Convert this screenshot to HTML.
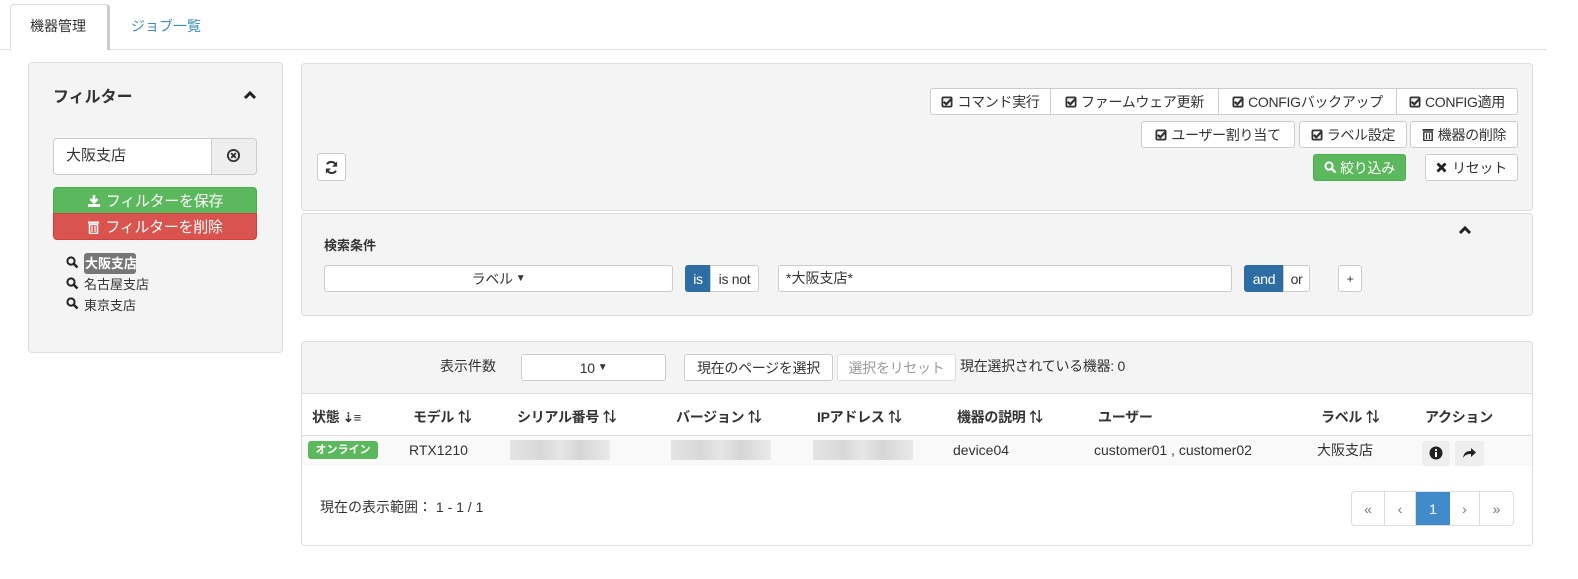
<!DOCTYPE html>
<html><head><meta charset="utf-8"><style>
*{box-sizing:border-box;margin:0;padding:0}
body{width:1578px;height:579px;background:#fff;font-family:"Liberation Sans","Noto Sans CJK JP",sans-serif;font-size:14px;color:#333;position:relative;overflow:hidden}
.a{position:absolute}
.b{position:absolute;border:1px solid #ccc;background:#fff;border-radius:3px;display:flex;align-items:center;justify-content:center;white-space:nowrap;font-size:14px;color:#333;letter-spacing:-0.3px}
.p{position:absolute;background:#f4f4f4;border:1px solid #ddd;border-radius:4px}
.t{position:absolute;white-space:nowrap;line-height:1}
.chk{display:inline-block;width:12px;height:12px;margin-right:4px}
.th{position:absolute;top:407px;font-weight:bold;font-size:14px;white-space:nowrap;letter-spacing:-0.3px}
.blur{position:absolute;top:440px;height:20px;background:linear-gradient(90deg,#e4e4e4,#d8d8d8 30%,#e6e6e6 50%,#d6d6d6 70%,#eaeaea)}
</style></head><body>
<!-- tabs -->
<div class="a" style="left:0;top:49px;width:1546px;height:1px;background:#ddd"></div>
<div class="a" style="left:10px;top:4px;width:100px;height:46px;background:#fff;border:1px solid #ddd;border-bottom:none;border-right:3px solid #ccc;border-radius:4px 4px 0 0"></div>
<div class="t" style="left:30px;top:19px">機器管理</div>
<div class="t" style="left:131px;top:19px;color:#3c8dbc">ジョブ一覧</div>

<!-- left panel -->
<div class="p" style="left:28px;top:62px;width:255px;height:291px"></div>
<div class="t" style="left:53px;top:90px;font-weight:bold;font-size:16px">フィルター</div>
<svg class="a" style="left:243px;top:90px" width="14" height="10" viewBox="0 0 14 10"><path d="M2 8L7 3L12 8" stroke="#222" stroke-width="3" fill="none"/></svg>
<div class="a" style="left:53px;top:138px;width:159px;height:37px;background:#fff;border:1px solid #ccc;border-radius:4px 0 0 4px"></div>
<div class="t" style="left:66px;top:148px;font-size:15px">大阪支店</div>
<div class="a" style="left:211px;top:138px;width:46px;height:37px;background:#eee;border:1px solid #ccc;border-radius:0 4px 4px 0"></div>
<svg class="a" style="left:226px;top:148px" width="15" height="15" viewBox="0 0 16 16"><circle cx="8" cy="8" r="6" stroke="#333" stroke-width="2" fill="none"/><path d="M5.5 5.5L10.5 10.5M10.5 5.5L5.5 10.5" stroke="#333" stroke-width="2"/></svg>
<div class="b" style="left:53px;top:187px;width:204px;height:27px;background:#5cb85c;border-color:#4cae4c;color:#fff;border-radius:4px 4px 0 0;font-size:15px"><svg width="14" height="14" viewBox="0 0 14 14" style="margin-right:5px"><path d="M7 1V8M3.5 5L7 8.5L10.5 5" stroke="#fff" stroke-width="2.5" fill="none"/><rect x="1" y="10" width="12" height="3" fill="#fff"/></svg>フィルターを保存</div>
<div class="b" style="left:53px;top:213px;width:204px;height:27px;background:#d9534f;border-color:#d43f3a;color:#fff;border-radius:0 0 4px 4px;font-size:15px"><svg width="13" height="14" viewBox="0 0 13 14" style="margin-right:5px"><rect x="1" y="1.5" width="11" height="2" fill="#fff"/><rect x="2.5" y="4.5" width="8" height="9" fill="none" stroke="#fff" stroke-width="1.5"/><path d="M5 6V12M8 6V12" stroke="#fff" stroke-width="1.2"/></svg>フィルターを削除</div>
<svg class="a" style="left:66px;top:256px" width="13" height="13" viewBox="0 0 13 13"><circle cx="5" cy="5" r="3.6" stroke="#222" stroke-width="2" fill="none"/><path d="M7.5 7.5L11.5 11.5" stroke="#222" stroke-width="2.5"/></svg>
<div class="a" style="left:84px;top:253px;width:52px;height:21px;background:#777;border-radius:3px"></div>
<div class="t" style="left:85px;top:257px;color:#fff;font-weight:bold;font-size:13px">大阪支店</div>
<svg class="a" style="left:66px;top:277px" width="13" height="13" viewBox="0 0 13 13"><circle cx="5" cy="5" r="3.6" stroke="#222" stroke-width="2" fill="none"/><path d="M7.5 7.5L11.5 11.5" stroke="#222" stroke-width="2.5"/></svg>
<div class="t" style="left:84px;top:278px;font-size:13px">名古屋支店</div>
<svg class="a" style="left:66px;top:297px" width="13" height="13" viewBox="0 0 13 13"><circle cx="5" cy="5" r="3.6" stroke="#222" stroke-width="2" fill="none"/><path d="M7.5 7.5L11.5 11.5" stroke="#222" stroke-width="2.5"/></svg>
<div class="t" style="left:84px;top:299px;font-size:13px">東京支店</div>

<!-- top-right panel -->
<div class="p" style="left:301px;top:63px;width:1232px;height:148px"></div>
<svg width="0" height="0" style="position:absolute"><defs><symbol id="ck" viewBox="0 0 12 12"><rect x="0.5" y="0.5" width="11" height="11" rx="2" fill="#333"/><rect x="2.3" y="2.3" width="7.4" height="7.4" fill="#fff"/><path d="M2.8 5.8L5.3 8.3L11 2.3" stroke="#333" stroke-width="2.2" fill="none"/></symbol></defs></svg>
<div class="b" style="left:930px;top:88px;width:121px;height:27px;border-radius:3px 0 0 3px"><svg class="chk"><use href="#ck"/></svg>コマンド実行</div>
<div class="b" style="left:1050px;top:88px;width:169px;height:27px;border-radius:0"><svg class="chk"><use href="#ck"/></svg>ファームウェア更新</div>
<div class="b" style="left:1218px;top:88px;width:179px;height:27px;border-radius:0"><svg class="chk"><use href="#ck"/></svg>CONFIGバックアップ</div>
<div class="b" style="left:1396px;top:88px;width:122px;height:27px;border-radius:0 3px 3px 0"><svg class="chk"><use href="#ck"/></svg>CONFIG適用</div>
<div class="b" style="left:1141px;top:121px;width:154px;height:27px"><svg class="chk"><use href="#ck"/></svg>ユーザー割り当て</div>
<div class="b" style="left:1299px;top:121px;width:108px;height:27px"><svg class="chk"><use href="#ck"/></svg>ラベル設定</div>
<div class="b" style="left:1410px;top:121px;width:108px;height:27px"><svg width="12" height="13" viewBox="0 0 12 13" style="margin-right:4px"><rect x="0.5" y="1" width="11" height="1.8" fill="#333"/><rect x="1.8" y="4" width="8.4" height="8.5" fill="none" stroke="#333" stroke-width="1.4"/><path d="M4.5 5.5V11M7.5 5.5V11" stroke="#333" stroke-width="1.2"/></svg>機器の削除</div>
<div class="b" style="left:1313px;top:154px;width:93px;height:27px;background:#5cb85c;border-color:#4cae4c;color:#fff"><svg width="13" height="13" viewBox="0 0 13 13" style="margin-right:3px"><circle cx="5" cy="5" r="3.6" stroke="#fff" stroke-width="2" fill="none"/><path d="M7.5 7.5L11.5 11.5" stroke="#fff" stroke-width="2.5"/></svg>絞り込み</div>
<div class="b" style="left:1425px;top:154px;width:93px;height:27px"><svg width="11" height="11" viewBox="0 0 11 11" style="margin-right:5px"><path d="M1.5 1.5L9.5 9.5M9.5 1.5L1.5 9.5" stroke="#222" stroke-width="2.8"/></svg>リセット</div>
<div class="b" style="left:317px;top:153px;width:29px;height:28px"><svg width="15" height="15" viewBox="0 0 16 16"><path d="M13 6A5.5 5.5 0 0 0 3.2 4.5M3 10A5.5 5.5 0 0 0 12.8 11.5" stroke="#333" stroke-width="2.2" fill="none"/><path d="M14 1.5V7H8.5Z M2 14.5V9H7.5Z" fill="#333"/></svg></div>

<!-- search panel -->
<div class="p" style="left:301px;top:213px;width:1232px;height:103px"></div>
<div class="t" style="left:324px;top:239px;font-weight:bold;font-size:13px">検索条件</div>
<svg class="a" style="left:1458px;top:225px" width="14" height="10" viewBox="0 0 14 10"><path d="M2 8L7 3L12 8" stroke="#222" stroke-width="3" fill="none"/></svg>
<div class="b" style="left:324px;top:265px;width:349px;height:27px">ラベル<span style="font-size:10px;margin-left:3px">▼</span></div>
<div class="b" style="left:685px;top:265px;width:26px;height:27px;background:#2e6da4;border-color:#2e6da4;color:#fff;border-radius:3px 0 0 3px">is</div>
<div class="b" style="left:710px;top:265px;width:49px;height:27px;border-radius:0 3px 3px 0">is not</div>
<div class="a" style="left:778px;top:265px;width:454px;height:27px;background:#fff;border:1px solid #ccc;border-radius:3px"></div>
<div class="t" style="left:786px;top:271px">*大阪支店*</div>
<div class="b" style="left:1244px;top:265px;width:40px;height:27px;background:#2e6da4;border-color:#2e6da4;color:#fff;border-radius:3px 0 0 3px">and</div>
<div class="b" style="left:1283px;top:265px;width:27px;height:27px;border-radius:0 3px 3px 0">or</div>
<div class="b" style="left:1338px;top:265px;width:24px;height:27px;font-size:12px">+</div>

<!-- table panel -->
<div class="a" style="left:301px;top:341px;width:1232px;height:205px;background:#fff;border:1px solid #ddd;border-radius:4px"></div>
<div class="a" style="left:302px;top:342px;width:1230px;height:52px;background:#f4f4f4;border-bottom:1px solid #ddd;border-radius:4px 4px 0 0"></div>
<div class="t" style="left:440px;top:359px">表示件数</div>
<div class="b" style="left:521px;top:354px;width:145px;height:27px">10<span style="font-size:10px;margin-left:3px">▼</span></div>
<div class="b" style="left:684px;top:354px;width:149px;height:27px">現在のページを選択</div>
<div class="b" style="left:837px;top:354px;width:119px;height:27px;color:#999;border-color:#ddd">選択をリセット</div>
<div class="t" style="left:960px;top:359px;letter-spacing:-0.3px">現在選択されている機器: 0</div>

<div class="th" style="left:312px">状態 <span style="font-size:13px">⇣≡</span></div>
<div class="th" style="left:413px">モデル ⇅</div>
<div class="th" style="left:517px">シリアル番号 ⇅</div>
<div class="th" style="left:676px">バージョン ⇅</div>
<div class="th" style="left:817px">IPアドレス ⇅</div>
<div class="th" style="left:957px">機器の説明 ⇅</div>
<div class="th" style="left:1098px">ユーザー</div>
<div class="th" style="left:1321px">ラベル ⇅</div>
<div class="th" style="left:1425px">アクション</div>
<div class="a" style="left:302px;top:435px;width:1230px;height:1px;background:#ddd"></div>
<div class="a" style="left:302px;top:436px;width:1230px;height:30px;background:#f9f9f9"></div>
<div class="a" style="left:308px;top:441px;width:70px;height:18px;background:#5cb85c;border-radius:3px;color:#fff;font-size:11px;font-weight:bold;text-align:center;line-height:18px">オンライン</div>
<div class="t" style="left:409px;top:443px">RTX1210</div>
<div class="blur" style="left:510px;width:100px"></div>
<div class="blur" style="left:671px;width:100px"></div>
<div class="blur" style="left:813px;width:100px"></div>
<div class="t" style="left:953px;top:443px">device04</div>
<div class="t" style="left:1094px;top:443px">customer01 , customer02</div>
<div class="t" style="left:1317px;top:443px">大阪支店</div>
<div class="a" style="left:1422px;top:441px;width:28px;height:25px;background:#eee;border-radius:3px"></div>
<svg class="a" style="left:1429px;top:446px" width="14" height="14" viewBox="0 0 14 14"><circle cx="7" cy="7" r="6.5" fill="#222"/><rect x="6" y="6" width="2" height="5" fill="#fff"/><circle cx="7" cy="4" r="1.1" fill="#fff"/></svg>
<div class="a" style="left:1455px;top:441px;width:29px;height:25px;background:#eee;border-radius:3px"></div>
<svg class="a" style="left:1462px;top:446px" width="15" height="13" viewBox="0 0 15 13"><path d="M1 12C2 6 5 5 9 5V2L14 6.5L9 11V8C5 8 3 9 1 12Z" fill="#222"/></svg>

<div class="t" style="left:320px;top:500px">現在の表示範囲： <span style="color:#333">1 - 1 / 1</span></div>
<div class="a" style="left:1351px;top:491px;width:163px;height:35px;border:1px solid #ddd;border-radius:4px;display:flex;overflow:hidden;color:#777">
<div style="width:33px;border-right:1px solid #ddd;display:flex;align-items:center;justify-content:center">«</div>
<div style="width:31px;border-right:1px solid #ddd;display:flex;align-items:center;justify-content:center">‹</div>
<div style="width:34px;background:#428bca;color:#fff;display:flex;align-items:center;justify-content:center">1</div>
<div style="width:30px;border-right:1px solid #ddd;display:flex;align-items:center;justify-content:center">›</div>
<div style="width:33px;display:flex;align-items:center;justify-content:center">»</div>
</div>
</body></html>
